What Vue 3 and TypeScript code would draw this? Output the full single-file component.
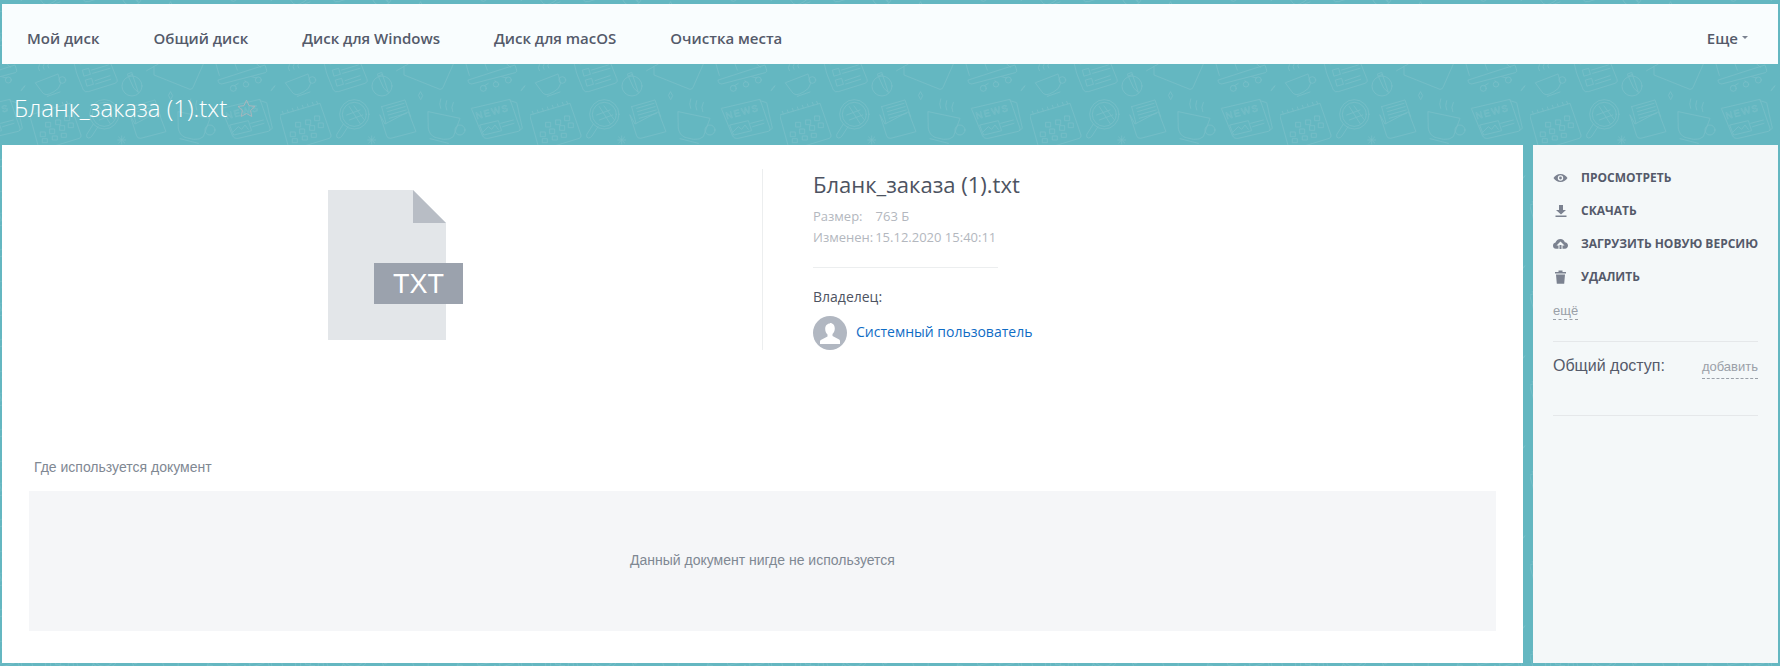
<script setup lang="ts">
interface NavItem { label: string }
const navItems: NavItem[] = [
  { label: 'Мой диск' },
  { label: 'Общий диск' },
  { label: 'Диск для Windows' },
  { label: 'Диск для macOS' },
  { label: 'Очистка места' },
]
</script>

<template>
  <div class="page">
    <svg class="backdrop" aria-hidden="true">
      <defs>
        <pattern id="doodles" x="30" y="60" width="250" height="90" patternUnits="userSpaceOnUse">
          <g transform="scale(0.33333)" fill="none" stroke="#76bec7" stroke-width="2.600" stroke-linecap="round" stroke-linejoin="round">
            <!-- small cup -->
            <path d="M17 68 L84 42 L92 70 Q88 88 72 95 L58 102 Q44 108 36 96 Z" />
            <circle cx="97" cy="60" r="10" />
            <path d="M52 109 L90 96 M28 32 q-6 -8 0 -18 M42 28 q-6 -8 0 -16 M56 24 q-6 -8 0 -14" />
            <!-- checklist -->
            <path d="M130 0 L140 40 L160 90 Q165 97 175 95 L255 70 Q265 66 260 55 L238 0" />
            <path d="M158 30 l18 -5 l5 18 l-18 5z M167 60 l18 -5 l5 18 l-18 5z M150 12 l18 -5" />
            <path d="M185 30 L235 15 M188 40 L240 25 M195 62 L240 47 M197 72 L242 58" />
            <!-- pencil in a circle -->
            <circle cx="306" cy="78" r="30" />
            <path d="M293 42 L305 37 L325 97 L312 85 Z M296 48 L308 43" />
            <!-- open folder -->
            <path d="M350 32 L385 12 M372 22 L372 45 L480 88 Q488 88 490 80 L520 12" />
            <!-- presentation board -->
            <path d="M565 60 L705 15 L710 30 Q712 35 706 38 L575 72 Q566 72 565 66 Z" />
            <path d="M558 12 L568 46 M615 12 L622 30 M680 12 L692 22" />
            <path d="M625 70 L612 78 M645 62 L648 66 M665 50 L680 54" />
            <circle cx="610" cy="85" r="9" /><circle cx="648" cy="73" r="8" /><circle cx="685" cy="60" r="9" />
            <!-- sparkles -->
            <path d="M422 96 L428 107 L422 119 L416 107 Z" />
            <path d="M734 78 L730 85 L723 92 L727 86 Z" />
            <path d="M275 228 V252 M263 240 H287 M266 231 L284 249 M284 231 L266 249" />
            <!-- calendar -->
            <path d="M0 165 L120 130 L153 225 Q155 232 148 235 L40 268 Q30 270 26 262 Z" />
            <path d="M10 162 l-3 -8 M25 158 l-3 -8 M40 153 l-3 -8 M55 149 l-3 -8 M70 144 l-3 -8 M85 140 l-3 -8 M100 135 l-3 -8 M113 132 l-3 -8" />
            <path d="M48 187 h14 v14 h-14z M78 180 h14 v14 h-14z M105 168 h14 v14 h-14z M32 216 h14 v14 h-14z M60 207 h14 v14 h-14z M90 197 h14 v14 h-14z M116 189 h14 v14 h-14z M38 236 h14 v12 h-14z M68 228 h14 v12 h-14z M95 220 h14 v12 h-14z" />
            <!-- magnifier -->
            <circle cx="223" cy="163" r="44" /><circle cx="223" cy="163" r="36" />
            <path d="M190 192 L170 224 Q168 234 176 234 Q182 234 186 228 L204 200" />
            <path d="M208 140 L240 190 M200 165 L240 150 M208 180 L248 165 M222 138 L252 178" />
            <!-- envelope with letter -->
            <path d="M300 165 L315 192 L385 155 L408 215 L332 235 Q322 236 320 228 Z" />
            <path d="M305 140 L375 120 L392 170 M305 140 L318 190" />
            <path d="M320 145 L372 130 M322 155 L375 140 M325 165 L378 150 M328 175 L380 160" />
            <!-- big cup -->
            <path d="M445 155 L540 175 L520 230 Q510 240 490 238 L465 232 Q448 225 445 205 Z" />
            <circle cx="540" cy="210" r="15" />
            <path d="M450 236 L505 250 M482 145 q-6 -12 0 -28 M500 150 q-6 -12 0 -28 M518 155 q-6 -12 2 -28" />
            <!-- newspaper -->
            <path d="M575 145 L690 118 L720 205 Q722 212 715 214 L625 235 Q612 237 608 228 Z" />
            <path d="M690 122 L710 128 L727 205 L718 212" />
            <text x="590" y="178" transform="rotate(-15 590 178)" font-family="Liberation Sans, sans-serif" font-size="28" letter-spacing="5" stroke-width="1.500">NEWS</text>
            <path d="M600 195 L655 182 L665 212 L612 225 Z M610 215 L625 200 L635 208 L645 195 L655 208 M662 190 L700 180 M668 200 L702 190" />
          </g>
        </pattern>
      </defs>
      <rect width="100%" height="100%" fill="url(#doodles)" />
    </svg>

    <nav class="nav">
      <div class="nav-links">
        <span v-for="item in navItems" :key="item.label" class="nav-link">{{ item.label }}</span>
      </div>
      <span class="nav-more">Еще<i class="caret"></i></span>
    </nav>

    <header class="title-bar">
      <h1 class="title">Бланк_заказа (1).txt</h1>
      <svg class="star" viewBox="0 0 24 24" width="21" height="21" aria-hidden="true">
        <path d="M12 2.500l2.900 6.300 6.800.8-5 4.700 1.300 6.800-6-3.400-6 3.400 1.300-6.800-5-4.700 6.800-.8z" fill="none" stroke="#aab6bc" stroke-width="1.100" />
      </svg>
    </header>

    <div class="columns">
      <main class="main">
        <section class="doc">
          <div class="preview">
            <div class="file">
              <div class="sheet"></div>
              <div class="fold"></div>
              <div class="ext">TXT</div>
            </div>
          </div>
          <div class="info">
            <h2 class="doc-name">Бланк_заказа (1).txt</h2>
            <div class="meta first"><span class="meta-key">Размер:</span><span class="meta-val-size">763 Б</span></div>
            <div class="meta"><span class="meta-key">Изменен:</span><span>15.12.2020 15:40:11</span></div>
            <div class="info-rule"></div>
            <div class="owner-label">Владелец:</div>
            <div class="owner">
              <svg class="avatar" viewBox="0 0 34 34" width="34" height="34" aria-hidden="true">
                <circle cx="17" cy="17" r="17" fill="#b1b7c1" />
                <path d="M17 7.500c-3 0-4.800 2.300-4.800 5.500 0 2.400 1 4.300 2.300 5.500v2l-6.200 3.200c-.8.4-1.300 1-1.300 2V28h20v-2.800c0-1-.5-1.600-1.300-2l-6.200-3.200v-2c1.300-1.200 2.300-3.100 2.300-5.500 0-3.200-1.800-5.500-4.800-5.500z" fill="#fff" />
              </svg>
              <a class="owner-link">Системный пользователь</a>
            </div>
          </div>
        </section>
        <section class="usage">
          <div class="usage-title">Где используется документ</div>
          <div class="usage-box">Данный документ нигде не используется</div>
        </section>
      </main>

      <aside class="side">
        <ul class="actions">
          <li class="action">
            <svg class="action-icon" viewBox="0 0 16 16" width="16" height="16" aria-hidden="true"><path fill-rule="evenodd" d="M7.500 4c3.200 0 5.700 1.700 7 4-1.300 2.300-3.800 4-7 4s-5.700-1.700-7-4c1.300-2.300 3.800-4 7-4zm0 1.300a2.700 2.700 0 1 0 0 5.400 2.700 2.700 0 0 0 0-5.400zm0 1.300a1.400 1.400 0 1 1 0 2.800 1.400 1.400 0 0 1 0-2.800z" fill="#7b8290" /></svg>
            ПРОСМОТРЕТЬ
          </li>
          <li class="action">
            <svg class="action-icon" viewBox="0 0 16 16" width="16" height="16" aria-hidden="true"><path d="M6 2h4v5h3l-5 4.500L3 7h3zM2.500 12.500h11V14h-11z" fill="#7b8290" /></svg>
            СКАЧАТЬ
          </li>
          <li class="action">
            <svg class="action-icon" viewBox="0 0 16 16" width="16" height="16" aria-hidden="true"><path d="M7.500 3c2.200 0 3.900 1.400 4.300 3.300 1.700.2 3.200 1.500 3.200 3.300 0 1.700-1.300 3.200-3 3.200H9.500V9.500h2L7.500 5.500l-4 4h2v3.300H3C1.300 12.800 0 11.300 0 9.700c0-1.500 1-2.800 2.500-3.100C3 4.500 5 3 7.500 3z" fill="#7b8290" /><path d="M6.500 9h2v4h-2z" fill="#7b8290" /></svg>
            ЗАГРУЗИТЬ НОВУЮ ВЕРСИЮ
          </li>
          <li class="action">
            <svg class="action-icon" viewBox="0 0 16 16" width="16" height="16" aria-hidden="true"><path d="M5.500 1.500h4V3H13v1.500H2V3h3.500zM3 5.500h9l-.8 9.200H3.800z" fill="#7b8290" /></svg>
            УДАЛИТЬ
          </li>
        </ul>
        <span class="more">ещё</span>
        <div class="share">
          <span class="share-label">Общий доступ:</span>
          <span class="share-add">добавить</span>
        </div>
        <div class="share-rule"></div>
      </aside>
    </div>
  </div>
</template>

<style>
html, body { margin: 0; background: #64b7c1; }
</style>

<style scoped>
.page {
  position: relative;
  box-sizing: border-box;
  width: 1780px;
  height: 666px;
  padding: 4px 2px 3px;
  background: #64b7c1;
  overflow: hidden;
  display: flex;
  flex-direction: column;
  font-family: "Liberation Sans", sans-serif;
}
.backdrop { position: absolute; inset: 0; width: 100%; height: 100%; }
.nav, .title-bar, .columns { position: relative; }

.nav {
  height: 60px;
  box-sizing: border-box;
  flex: none;
  display: flex;
  align-items: center;
  justify-content: space-between;
  background: #f9fdfe;
  padding: 7px 30px 0 25px;
  font-family: "Open Sans", sans-serif;
  font-weight: 600;
  font-size: 15px;
  color: #545a6a;
}
.nav-links { display: flex; gap: 54px; }
.nav-more { display: flex; align-items: center; gap: 4px; }
.caret {
  width: 0; height: 0;
  border-left: 3px solid transparent;
  border-right: 3px solid transparent;
  border-top: 3px solid #7b8290;
}

.title-bar {
  height: 81px;
  box-sizing: border-box;
  flex: none;
  display: flex;
  align-items: center;
  padding: 6px 0 0 12px;
  gap: 9px;
  color: #fff;
}
.title {
  margin: 0;
  font-family: "Open Sans", sans-serif;
  font-weight: 300;
  font-size: 24px;
}
.star { margin-top: 2px; }

.columns { flex: 1; display: flex; gap: 10px; min-height: 0; }
.main {
  width: 1521px;
  flex: none;
  background: #fff;
  display: flex;
  flex-direction: column;
}
.doc { display: flex; height: 288px; padding-top: 24px; box-sizing: border-box; }
.preview { width: 761px; flex: none; box-sizing: border-box; border-right: 1px solid #eceeef; height: 181px; padding: 21px 0 0 326px; }
.file { position: relative; width: 118px; height: 150px; }
.sheet {
  width: 100%;
  height: 100%;
  background: #e3e6e9;
  clip-path: polygon(0 0, 85px 0, 100% 33px, 100% 100%, 0 100%);
}
.fold {
  position: absolute;
  left: 85px; top: 0;
  width: 33px; height: 33px;
  background: #b8bdc5;
  clip-path: polygon(0 0, 100% 100%, 0 100%);
}
.ext {
  position: absolute;
  left: 46px; top: 73px;
  width: 89px; height: 41px;
  background: #9ba2ad;
  color: #fff;
  font-size: 27px;
  line-height: 43px;
  text-align: center;
}
.info { padding-left: 50px; font-family: "Open Sans", sans-serif; }
.doc-name { margin: 0; font-weight: 400; font-size: 22px; line-height: 30px; color: #4d5361; }
.meta { font-size: 13px; color: #b3b7be; line-height: 21px; display: flex; }
.meta.first { margin-top: 7px; }
.meta-key { margin-right: 2px; }
.meta-val-size { margin-left: 11px; }
.info-rule { width: 185px; height: 1px; background: #eceeef; margin: 19px 0 20px; }
.owner-label { font-size: 14px; color: #4d5361; line-height: 18px; }
.owner { display: flex; align-items: center; gap: 9px; margin-top: 10px; }
.owner-link { color: #0f6cc5; font-size: 14px; line-height: 18px; padding-bottom: 2px; }

.usage { padding: 0 27px; }
.usage-title { font-size: 14px; color: #7f8893; margin: 26px 0 16px 5px; line-height: 16px; }
.usage-box {
  height: 140px;
  box-sizing: border-box;
  padding-bottom: 2px;
  background: #f5f6f8;
  display: flex;
  align-items: center;
  justify-content: center;
  color: #7f8893;
  font-size: 14px;
}

.side {
  flex: 1;
  min-width: 0;
  background: #f4f8f9;
  padding: 16px 20px 0;
  font-family: "Liberation Sans", sans-serif;
}
.actions { list-style: none; margin: 0; padding: 0; }
.action {
  height: 33px;
  display: flex;
  align-items: center;
  gap: 12px;
  font-family: "Open Sans", sans-serif;
  font-weight: 700;
  font-size: 12px;
  color: #545a6a;
  white-space: nowrap;
}
.action-icon { flex: none; }
.more {
  display: inline-block;
  margin-top: 9px;
  font-size: 13px;
  line-height: 17px;
  color: #9aa0a8;
  border-bottom: 1px dashed #9aa0a8;
}
.share {
  margin-top: 21px;
  padding-top: 15px;
  border-top: 1px solid #e5e8ea;
  display: flex;
  justify-content: space-between;
  align-items: flex-start;
}
.share-label { font-size: 16px; color: #545a6a; }
.share-add { font-size: 13px; color: #9aa0a8; border-bottom: 1px dashed #9aa0a8; padding: 2px 0 4px; }
.share-rule { height: 1px; background: #e5e8ea; margin-top: 36px; }
</style>
